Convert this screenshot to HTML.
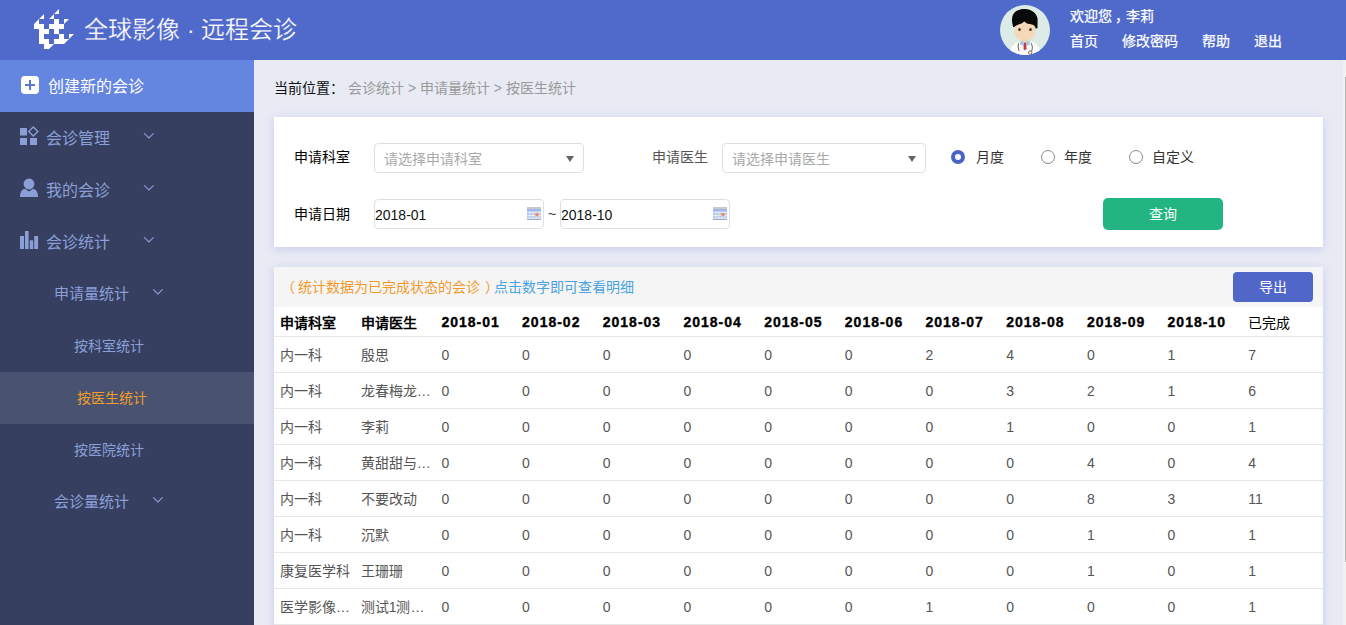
<!DOCTYPE html>
<html lang="zh-CN">
<head>
<meta charset="utf-8">
<style>
*{margin:0;padding:0;box-sizing:border-box;}
html,body{width:1346px;height:625px;overflow:hidden;}
body{font-family:"Liberation Sans",sans-serif;background:#e8eaf4;position:relative;color:#333;}
.abs{position:absolute;}
.t{position:absolute;white-space:nowrap;line-height:1;}
#hdr{left:0;top:0;width:1346px;height:60px;background:#506acb;}
#side{left:0;top:60px;width:254px;height:565px;background:#363f5f;}
.side-t{position:absolute;white-space:nowrap;line-height:1;color:#8c9fd8;}
.chev{position:absolute;width:12px;height:8px;}
.lbl{position:absolute;white-space:nowrap;line-height:1;font-size:14px;color:#333;}
.sel{position:absolute;height:30px;border:1px solid #dcdfe6;border-radius:4px;background:#fff;}
.sel .ph{position:absolute;left:9px;top:8px;font-size:14px;color:#a9a9a9;line-height:1;white-space:nowrap;}
.sel .arr{position:absolute;right:9px;top:12px;width:0;height:0;border-left:4px solid transparent;border-right:4px solid transparent;border-top:6px solid #666;}
.date{position:absolute;height:30px;border:1px solid #dcdfe6;border-radius:4px;background:#fff;}
.date .v{position:absolute;left:0px;top:8px;font-size:14px;color:#111;line-height:1;}
.cal{position:absolute;right:2px;top:7px;width:14px;height:13px;}
.radio{position:absolute;width:14px;height:14px;border-radius:50%;border:1px solid #888;background:#fff;}
.radio.on{border:4px solid #4a63c7;}
#panel1{left:274px;top:117px;width:1049px;height:130px;background:#fff;box-shadow:0 2px 8px rgba(160,170,230,.45);}
#panel2{left:274px;top:267px;width:1049px;height:380px;background:#fff;box-shadow:0 2px 8px rgba(160,170,230,.45);}
table{position:absolute;left:0;top:40px;width:1049px;border-collapse:collapse;table-layout:fixed;}
td,th{height:36px;padding:0 0 0 6px;text-align:left;font-size:14px;color:#555;border-bottom:1px solid #e6e6e6;white-space:nowrap;overflow:hidden;font-weight:normal;}
th{height:29px;padding-top:2px;color:#000;font-weight:bold;}
td:nth-child(n+3){padding-top:2px;}
th.d{letter-spacing:1px;-webkit-text-stroke:0.35px #000;}
</style>
</head>
<body>
<div id="hdr" class="abs">
  <svg class="abs" style="left:34px;top:9px" width="40" height="40" viewBox="0 0 40 40" fill="#fff"><path d="M25 0v5h-5zM10 5v5h-5zM20 5v5h-5zM5 10v5h-5zM20 10h5v5h-5zM30 10h5l-5 5zM0 15h5v5h-5zM5 15h5v5h-5zM15 15h5v5h-5zM20 15h5v5h-5zM25 15h5v5h-5zM5 20h5v5h-5zM10 20h5v5h-5zM20 20h5v5h-5zM5 25h5v5h-5zM25 25h5v5h-5zM35 25h5l-5 5zM5 30h5v5h-5zM10 30h5v5h-5zM20 30h5v5h-5zM25 30h5v5h-5zM30 30h5l-5 5zM10 35h5v5h-5zM15 35h5l-5 5z"/></svg>
  <div class="t" style="left:84px;top:18px;font-size:24px;color:#fff;-webkit-text-stroke:0.25px #506acb;">全球影像 · 远程会诊</div>
  <svg class="abs" style="left:1000px;top:5px" width="50" height="50" viewBox="0 0 50 50">
    <defs><clipPath id="cc"><circle cx="25" cy="25" r="25"/></clipPath></defs>
    <circle cx="25" cy="25" r="25" fill="#dcebe6"/>
    <g clip-path="url(#cc)">
      <path d="M16 37.3 L11 42.5 L8.5 52 L41.5 52 L39 42.5 L34 37.3 Z" fill="#fbfbfb"/>
      <path d="M20.5 35.5 L25 37.2 L29.5 35.5 L30 39.5 L25 41.5 L20 39.5 Z" fill="#a9c6de"/>
      <path d="M24.1 37.8 L25.9 37.8 L26.6 43.8 L25 45.5 L23.4 43.8 Z" fill="#c23a4a"/>
      <path d="M18.6 38.2 Q17.3 42 19.2 46" stroke="#6d4c3d" stroke-width="0.9" fill="none"/>
      <path d="M31.4 38.2 Q33.2 42 31.8 46.2" stroke="#6d4c3d" stroke-width="0.9" fill="none"/>
      <circle cx="30.2" cy="47.6" r="1.7" stroke="#6d4c3d" stroke-width="0.9" fill="none"/>
      <rect x="22" y="31" width="6" height="6" fill="#f0cfae"/>
      <path d="M14.8 14 L35.2 14 L35.2 27 Q35 35.3 25 35.3 Q14.8 35.3 14.8 27 Z" fill="#f5d8b8"/>
      <path d="M13.2 22 C11.5 17 11.2 10.5 15 7 C18 4.3 23 3.8 27 4.2 C32 4.8 37 8.5 37.6 14 L37.5 23.3 L35.6 23.6 C35.2 21.2 34 20 32 19.5 L27 18.4 L24.3 16.6 L21.6 18.5 C18 19.6 15.6 20.6 14.3 22 Z" fill="#0a0a0a"/>
      <ellipse cx="19.5" cy="24.4" rx="1.3" ry="1.5" fill="#4a2a1a"/>
      <ellipse cx="30.5" cy="24.4" rx="1.3" ry="1.5" fill="#4a2a1a"/>
    </g>
  </svg>
  <div class="t" style="left:1070px;top:9px;font-size:14px;color:#fff;-webkit-text-stroke:0.25px #fff;">欢迎您<span style="position:relative;left:3px">，</span>李莉</div>
  <div class="t" style="left:1070px;top:34px;font-size:14px;color:#fff;-webkit-text-stroke:0.25px #fff;">首页</div>
  <div class="t" style="left:1122px;top:34px;font-size:14px;color:#fff;-webkit-text-stroke:0.25px #fff;">修改密码</div>
  <div class="t" style="left:1202px;top:34px;font-size:14px;color:#fff;-webkit-text-stroke:0.25px #fff;">帮助</div>
  <div class="t" style="left:1254px;top:34px;font-size:14px;color:#fff;-webkit-text-stroke:0.25px #fff;">退出</div>
</div>
<div id="side" class="abs">
  <div class="abs" style="left:0;top:0;width:254px;height:52px;background:#6586e0;"></div>
  <div class="abs" style="left:21px;top:16px;width:18px;height:18px;background:#fff;border-radius:4px;"></div>
  <div class="abs" style="left:25px;top:24px;width:10px;height:2px;background:#5d77d3;"></div>
  <div class="abs" style="left:29px;top:20px;width:2px;height:10px;background:#5d77d3;"></div>
  <div class="t" style="left:48px;top:19px;font-size:16px;color:#fff;">创建新的会诊</div>

  <svg class="abs" style="left:20px;top:68px;overflow:visible" width="18" height="18" viewBox="0 0 18 18" fill="#8c9ed6">
    <rect x="0" y="0" width="7" height="7.5"/><rect x="0" y="10" width="7" height="7"/><rect x="10" y="10" width="7" height="7"/>
    <path d="M13.3 -1 L17.9 3.5 L13.3 8 L8.7 3.5 Z" fill="none" stroke="#8c9ed6" stroke-width="1.4" transform="translate(0,0)"/>
  </svg>
  <svg class="abs" style="left:20px;top:118px" width="19" height="20" viewBox="0 0 19 20" fill="#8c9ed6">
    <circle cx="9" cy="6" r="5.4"/>
    <path d="M0 19 Q0 11.5 5 10.8 L9 13.5 L13 10.8 Q18 11.5 18 19 Z"/>
  </svg>
  <svg class="abs" style="left:20px;top:170px" width="19" height="19" viewBox="0 0 19 19" fill="#8c9ed6">
    <rect x="0" y="6" width="4" height="13"/><rect x="5" y="1" width="3.6" height="18"/><rect x="9.8" y="10.3" width="3.4" height="8.7"/><rect x="14.2" y="6" width="3.9" height="13"/>
  </svg>
  <svg class="chev" style="left:143px;top:72px" viewBox="0 0 12 8"><path d="M1.2 1.3 L5.9 6 L10.6 1.3" stroke="#8c9ed6" stroke-width="1.1" fill="none"/></svg>
  <svg class="chev" style="left:143px;top:124px" viewBox="0 0 12 8"><path d="M1.2 1.3 L5.9 6 L10.6 1.3" stroke="#8c9ed6" stroke-width="1.1" fill="none"/></svg>
  <svg class="chev" style="left:143px;top:176px" viewBox="0 0 12 8"><path d="M1.2 1.3 L5.9 6 L10.6 1.3" stroke="#8c9ed6" stroke-width="1.1" fill="none"/></svg>
  <svg class="chev" style="left:152px;top:228px" viewBox="0 0 12 8"><path d="M1.2 1.3 L5.9 6 L10.6 1.3" stroke="#8c9ed6" stroke-width="1.1" fill="none"/></svg>
  <svg class="chev" style="left:152px;top:436px" viewBox="0 0 12 8"><path d="M1.2 1.3 L5.9 6 L10.6 1.3" stroke="#8c9ed6" stroke-width="1.1" fill="none"/></svg>

  <div class="side-t" style="left:46px;top:71px;font-size:16px;">会诊管理</div>
  <div class="side-t" style="left:46px;top:123px;font-size:16px;">我的会诊</div>
  <div class="side-t" style="left:46px;top:175px;font-size:16px;">会诊统计</div>
  <div class="side-t" style="left:54px;top:226px;font-size:15px;">申请量统计</div>
  <div class="side-t" style="left:74px;top:279px;font-size:14px;">按科室统计</div>
  <div class="abs" style="left:0;top:312px;width:254px;height:52px;background:#495270;"></div>
  <div class="t" style="left:77px;top:331px;font-size:14px;color:#f29d2c;">按医生统计</div>
  <div class="side-t" style="left:74px;top:383px;font-size:14px;">按医院统计</div>
  <div class="side-t" style="left:54px;top:434px;font-size:15px;">会诊量统计</div>
</div>

<div class="t" style="left:274px;top:81px;font-size:14px;color:#111;">当前位置：</div>
<div class="t" style="left:348px;top:81px;font-size:14px;color:#999;">会诊统计 &gt; 申请量统计 &gt; 按医生统计</div>

<div id="panel1" class="abs">
  <div class="lbl" style="left:20px;top:33px;color:#000;">申请科室</div>
  <div class="sel" style="left:100px;top:26px;width:210px;"><span class="ph">请选择申请科室</span><span class="arr"></span></div>
  <div class="lbl" style="left:378px;top:33px;color:#555;">申请医生</div>
  <div class="sel" style="left:448px;top:26px;width:204px;"><span class="ph">请选择申请医生</span><span class="arr"></span></div>
  <div class="radio on" style="left:677px;top:33px;"></div>
  <div class="lbl" style="left:702px;top:33px;">月度</div>
  <div class="radio" style="left:767px;top:33px;"></div>
  <div class="lbl" style="left:790px;top:33px;">年度</div>
  <div class="radio" style="left:855px;top:33px;"></div>
  <div class="lbl" style="left:878px;top:33px;">自定义</div>

  <div class="lbl" style="left:20px;top:90px;color:#000;">申请日期</div>
  <div class="date" style="left:100px;top:82px;width:170px;"><span class="v">2018-01</span>
    <svg class="cal" viewBox="0 0 14 13"><rect x="0" y="0" width="14" height="2" fill="#c9c9c9"/><rect x="0" y="2" width="14" height="11" fill="#b3c5e6"/><rect x="0" y="2" width="14" height="2.2" fill="#9fb8ec"/><path d="M0 5.5h14M0 8.5h14M0 11.2h14M3 4v9M6 4v9M9 4v9M12 4v9" stroke="#f2f5fb" stroke-width="0.7"/><rect x="0" y="12" width="14" height="1" fill="#9aabc8"/><circle cx="10" cy="7.5" r="1.8" fill="#ea8a6e"/></svg></div>
  <div class="lbl" style="left:274px;top:90px;">~</div>
  <div class="date" style="left:286px;top:82px;width:170px;"><span class="v">2018-10</span>
    <svg class="cal" viewBox="0 0 14 13"><rect x="0" y="0" width="14" height="2" fill="#c9c9c9"/><rect x="0" y="2" width="14" height="11" fill="#b3c5e6"/><rect x="0" y="2" width="14" height="2.2" fill="#9fb8ec"/><path d="M0 5.5h14M0 8.5h14M0 11.2h14M3 4v9M6 4v9M9 4v9M12 4v9" stroke="#f2f5fb" stroke-width="0.7"/><rect x="0" y="12" width="14" height="1" fill="#9aabc8"/><circle cx="10" cy="7.5" r="1.8" fill="#ea8a6e"/></svg></div>
  <div class="abs" style="left:829px;top:81px;width:120px;height:32px;background:#22b582;border-radius:5px;"></div>
  <div class="t" style="left:875px;top:90px;font-size:14px;color:#fff;">查询</div>
</div>

<div id="panel2" class="abs">
  <div class="abs" style="left:0;top:0;width:1049px;height:40px;background:#f5f5f5;"></div>
  <div class="t" style="left:10px;top:13px;font-size:14px;color:#f19a2c;"><span style="position:relative;left:-3.5px">（</span>统计数据为已完成状态的会诊<span style="position:relative;left:4.5px">）</span><span style="color:#4aa3e0;position:relative;left:-0.5px">点击数字即可查看明细</span></div>
  <div class="abs" style="left:959px;top:5px;width:80px;height:30px;background:#5066c8;border-radius:4px;"></div>
  <div class="t" style="left:985px;top:13px;font-size:14px;color:#fff;">导出</div>
  <table>
    <tr><th>申请科室</th><th>申请医生</th><th class="d">2018-01</th><th class="d">2018-02</th><th class="d">2018-03</th><th class="d">2018-04</th><th class="d">2018-05</th><th class="d">2018-06</th><th class="d">2018-07</th><th class="d">2018-08</th><th class="d">2018-09</th><th class="d">2018-10</th><th style="font-weight:normal">已完成</th></tr>
    <tr><td>内一科</td><td>殷思</td><td>0</td><td>0</td><td>0</td><td>0</td><td>0</td><td>0</td><td>2</td><td>4</td><td>0</td><td>1</td><td>7</td></tr>
    <tr><td>内一科</td><td>龙春梅龙…</td><td>0</td><td>0</td><td>0</td><td>0</td><td>0</td><td>0</td><td>0</td><td>3</td><td>2</td><td>1</td><td>6</td></tr>
    <tr><td>内一科</td><td>李莉</td><td>0</td><td>0</td><td>0</td><td>0</td><td>0</td><td>0</td><td>0</td><td>1</td><td>0</td><td>0</td><td>1</td></tr>
    <tr><td>内一科</td><td>黄甜甜与…</td><td>0</td><td>0</td><td>0</td><td>0</td><td>0</td><td>0</td><td>0</td><td>0</td><td>4</td><td>0</td><td>4</td></tr>
    <tr><td>内一科</td><td>不要改动</td><td>0</td><td>0</td><td>0</td><td>0</td><td>0</td><td>0</td><td>0</td><td>0</td><td>8</td><td>3</td><td>11</td></tr>
    <tr><td>内一科</td><td>沉默</td><td>0</td><td>0</td><td>0</td><td>0</td><td>0</td><td>0</td><td>0</td><td>0</td><td>1</td><td>0</td><td>1</td></tr>
    <tr><td>康复医学科</td><td>王珊珊</td><td>0</td><td>0</td><td>0</td><td>0</td><td>0</td><td>0</td><td>0</td><td>0</td><td>1</td><td>0</td><td>1</td></tr>
    <tr><td>医学影像…</td><td>测试1测…</td><td>0</td><td>0</td><td>0</td><td>0</td><td>0</td><td>0</td><td>1</td><td>0</td><td>0</td><td>0</td><td>1</td></tr>
  </table>
</div>
<div class="abs" style="left:1343px;top:60px;width:3px;height:565px;background:#f1f1f1;"></div>
<div class="abs" style="left:1345px;top:77px;width:1px;height:485px;background:#b5b5b5;"></div>
</body>
</html>
